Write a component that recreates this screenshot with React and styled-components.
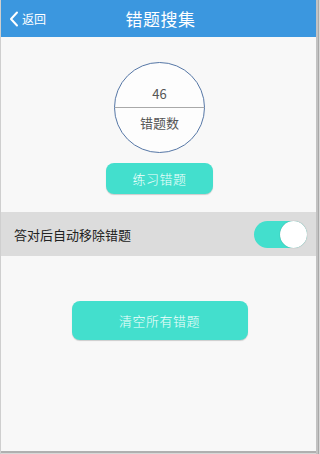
import React, { useState } from "react";
import styled, { createGlobalStyle } from "styled-components";

const Global = createGlobalStyle`
  html, body { margin: 0; padding: 0; }
  body {
    width: 320px; height: 454px; overflow: hidden;
    font-family: "Noto Sans CJK SC", "Noto Sans", sans-serif;
    background: linear-gradient(to right, #cfcfcf 0 1px, transparent 1px),
      linear-gradient(to left, #d8d8d8 0 1px, #a9a9a9 1px 2px, #c2c2c2 2px 4px, transparent 4px),
      linear-gradient(to top, #d8d8d8 0 1px, #b0b0b0 1px 3px, transparent 3px), #f8f8f8;
  }
`;

const Frame = styled.div`
  margin-left: 1px;
  width: 315px;
  height: 451px;
  background: #f8f8f8;
  display: flex;
  flex-direction: column;
  overflow: hidden;
`;

const Header = styled.div`
  height: 37px;
  background: #3b97df;
  display: flex;
  align-items: center;
  justify-content: center;
  position: relative;
  color: #fff;
`;

const Back = styled.div`
  position: absolute;
  left: 8px;
  top: 0;
  bottom: 0;
  display: flex;
  align-items: center;
  gap: 3px;
  font-size: 12px;
`;

const Title = styled.div`
  font-size: 17px;
  letter-spacing: 0.5px;
  margin-left: 4px;
`;

const Body = styled.div`
  display: flex;
  flex-direction: column;
  align-items: center;
  padding-top: 25px;
`;

const Circle = styled.div`
  width: 89px;
  height: 89px;
  border-radius: 50%;
  border: 1px solid #5677a6;
  background: #fdfdfd;
  display: flex;
  flex-direction: column;
  overflow: hidden;
  margin-left: 2px;
`;

const Half = styled.div`
  flex: 1;
  display: flex;
  align-items: ${(p) => (p.$top ? "flex-end" : "flex-start")};
  justify-content: center;
  padding: ${(p) => (p.$top ? "0 0 4px" : "4px 0 0")};
  font-size: 13px;
  color: #555;
  ${(p) => p.$top && "border-bottom: 1px solid #a9a9a9; margin-bottom: -1px;"}
  ${(p) => !p.$top && "margin-top: 2px;"}
`;

const TealButton = styled.button`
  width: ${(p) => p.$w}px;
  height: ${(p) => p.$h}px;
  border: none;
  border-radius: 8px;
  background: #43dfcd;
  box-shadow: 0 1px 1px rgba(0,0,0,0.18);
  color: #f4fffd;
  font-family: inherit;
  font-size: 13px;
  font-weight: 300;
  letter-spacing: 0.5px;
  padding: 0;
  margin-top: ${(p) => p.$mt}px;
  margin-left: ${(p) => p.$ml || 0}px;
`;

const Row = styled.div`
  margin-top: 18px;
  height: 44px;
  background: #dcdcdc;
  display: flex;
  align-items: center;
  justify-content: space-between;
  padding: 0 9px 0 13px;
  font-size: 13px;
  color: #222;
`;

const Toggle = styled.div`
  width: 53px;
  height: 27px;
  border-radius: 14px;
  background: #43dfcd;
  position: relative;
`;

const Knob = styled.div`
  position: absolute;
  right: 0;
  top: 0;
  width: 27px;
  height: 27px;
  border-radius: 50%;
  background: #fff;
  box-shadow: 0 0 1px rgba(0,0,0,0.35);
`;

const Bottom = styled.div`
  display: flex;
  justify-content: center;
  margin-top: 45px;
`;

export default function App() {
  const [on] = useState(true);
  return (
    <>
      <Global />
      <Frame>
        <Header>
          <Back>
            <svg width="10" height="16" viewBox="0 0 10 16">
              <path d="M8 1.5 L2 8 L8 14.5" stroke="#fff" strokeWidth="2" fill="none" strokeLinecap="round" strokeLinejoin="round" />
            </svg>
            <span>返回</span>
          </Back>
          <Title>错题搜集</Title>
        </Header>
        <Body>
          <Circle>
            <Half $top>46</Half>
            <Half>错题数</Half>
          </Circle>
          <TealButton $w={107} $h={31} $mt={10} $ml={2}>练习错题</TealButton>
        </Body>
        <Row>
          <span>答对后自动移除错题</span>
          <Toggle>{on && <Knob />}</Toggle>
        </Row>
        <Bottom>
          <TealButton $w={176} $h={39} $mt={0} $ml={2}>清空所有错题</TealButton>
        </Bottom>
      </Frame>
    </>
  );
}
